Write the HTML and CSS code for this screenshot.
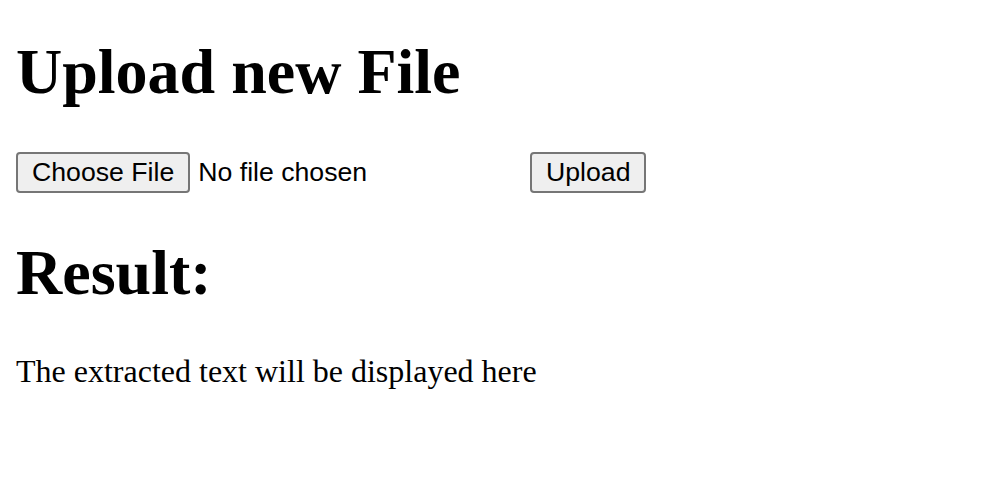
FILE: index.html
```html
<!DOCTYPE html>
<html>
<head>
<meta charset="utf-8">
<title>Upload new File</title>
<link rel="stylesheet" href="styles.css">
</head>
<body>
<h1 class="title title-first">Upload new File</h1>
<form class="upload-form">
  <span class="file-control"><button type="button" class="btn">Choose File</button><span class="file-label">No file chosen</span></span>
  <button type="button" class="btn">Upload</button>
</form>
<h1 class="title">Result:</h1>
<p class="result">The extracted text will be displayed here</p>
</body>
</html>
```
FILE: styles.css
```css
html, body {
  background: #fff;
}
body {
  margin: 16px;
  font-family: "Liberation Serif", "Times New Roman", serif;
  font-size: 32px;
  color: #000;
}
.title {
  font-size: 64px;
  font-weight: bold;
  margin: 42.88px 0;
}
.title-first {
  margin-top: 19px;
}
.upload-form {
  margin: 0;
}
.file-control {
  display: inline-block;
  width: 506px;
  white-space: nowrap;
  font-family: "Liberation Sans", Arial, sans-serif;
  font-size: 26.67px;
}
.file-label {
  margin-left: 8px;
}
.btn {
  font-family: "Liberation Sans", Arial, sans-serif;
  font-size: 26.67px;
  color: #000;
  background: #efefef;
  border: 2px solid #767676;
  border-radius: 4px;
  padding: 3px 14px;
  margin: 0;
  line-height: normal;
}
.result {
  margin: 32px 0;
}
```
